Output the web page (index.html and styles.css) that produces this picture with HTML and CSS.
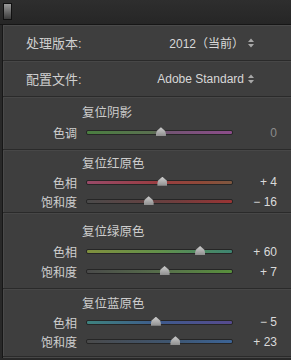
FILE: index.html
```html
<!DOCTYPE html>
<html lang="zh-CN">
<head>
    <meta charset="UTF-8">
    <meta name="viewport" content="width=device-width, initial-scale=1.0">
    <title>校准</title>
    <link rel="stylesheet" href="styles.css">
</head>
<body>
    <div class="topbar">
        <div class="grip"></div>
    </div>
    <div class="panel">
        <div class="pick-row">
            <span class="pick-label">处理版本:</span>
            <span class="pick-value">2012（当前）
                <svg class="updown" width="6" height="10" viewBox="0 0 6 10"><path d="M0 4 L3 0.5 L6 4 Z M0 6 L3 9.5 L6 6 Z"/></svg>
            </span>
        </div>
        <div class="pick-row">
            <span class="pick-label">配置文件:</span>
            <span class="pick-value">Adobe Standard
                <svg class="updown" width="6" height="10" viewBox="0 0 6 10"><path d="M0 4 L3 0.5 L6 4 Z M0 6 L3 9.5 L6 6 Z"/></svg>
            </span>
        </div>

        <div class="group g-shadow">
            <div class="group-title">复位阴影</div>
            <div class="slider-row">
                <span class="s-label">色调</span>
                <div class="track t-tint"><span class="thumb" style="left: 51%"></span></div>
                <span class="s-value dim">0</span>
            </div>
        </div>

        <div class="group g-red">
            <div class="group-title">复位红原色</div>
            <div class="slider-row">
                <span class="s-label">色相</span>
                <div class="track t-red-hue"><span class="thumb" style="left: 52%"></span></div>
                <span class="s-value">+ 4</span>
            </div>
            <div class="slider-row">
                <span class="s-label">饱和度</span>
                <div class="track t-red-sat"><span class="thumb" style="left: 42.5%"></span></div>
                <span class="s-value">&minus; 16</span>
            </div>
        </div>

        <div class="group g-green">
            <div class="group-title">复位绿原色</div>
            <div class="slider-row tall">
                <span class="s-label">色相</span>
                <div class="track t-green-hue"><span class="thumb" style="left: 78%"></span></div>
                <span class="s-value">+ 60</span>
            </div>
            <div class="slider-row tall">
                <span class="s-label">饱和度</span>
                <div class="track t-green-sat"><span class="thumb" style="left: 53.5%"></span></div>
                <span class="s-value">+ 7</span>
            </div>
        </div>

        <div class="group g-blue">
            <div class="group-title">复位蓝原色</div>
            <div class="slider-row">
                <span class="s-label">色相</span>
                <div class="track t-blue-hue"><span class="thumb" style="left: 47.5%"></span></div>
                <span class="s-value">&minus; 5</span>
            </div>
            <div class="slider-row">
                <span class="s-label">饱和度</span>
                <div class="track t-blue-sat"><span class="thumb" style="left: 61%"></span></div>
                <span class="s-value">+ 23</span>
            </div>
        </div>
    </div>
</body>
</html>
```

FILE: styles.css
```css
body {
    margin: 0;
    background-color: #282828;
    font-family: "Liberation Sans", "Noto Sans CJK SC", sans-serif;
    font-size: 12px;
    color: #d2d2d2;
    width: 291px;
    height: 360px;
    overflow: hidden;
}

.topbar {
    height: 25px;
    padding: 3px 0 0 3px;
    box-sizing: border-box;
    border-bottom: 1px solid #161616;
    background: linear-gradient(#2e2e2e, #262626);
}

.grip {
    width: 7px;
    height: 15px;
    border: 1px solid #111;
    background: linear-gradient(#9a9a9a, #6a6a6a 50%, #3a3a3a);
}

.panel {
    margin-left: 2px;
    border-left: 1px solid #171717;
    border-bottom: 1px solid #141414;
    background-color: #3e3e3e;
    box-shadow: inset 1px 1px 0 #4a4a4a;
}

.pick-row {
    height: 35px;
    display: flex;
    align-items: center;
    justify-content: space-between;
    padding: 0 37px 0 23px;
    border-bottom: 1px solid #2a2a2a;
    box-shadow: 0 1px 0 #474747;
}

.pick-label {
    color: #cfcfcf;
    font-size: 13px;
}

.pick-value {
    display: flex;
    align-items: center;
    gap: 4px;
    color: #d8d8d8;
}

.updown {
    fill: #a8a8a8;
}

.group {
    border-bottom: 1px solid #2a2a2a;
    box-shadow: 0 1px 0 #474747;
}

.g-shadow { padding: 6px 0 6px; }
.g-red { padding: 5px 0 0; }
.g-green { padding: 10px 0 6px; }
.g-blue { padding: 6px 0 4px; }

.group-title {
    height: 18px;
    line-height: 18px;
    padding-left: 79px;
    color: #cccccc;
    font-size: 12.5px;
}

.g-shadow .group-title {
    height: 20px;
    line-height: 20px;
}

.g-green .group-title {
    height: 19px;
}

.slider-row {
    display: grid;
    grid-template-columns: 74px 147px 35px;
    column-gap: 9px;
    align-items: center;
    height: 19.5px;
}

.slider-row.tall {
    height: 20px;
}

.s-label {
    text-align: right;
    color: #cfcfcf;
}

.s-value {
    text-align: right;
    color: #dadada;
}

.s-value.dim {
    color: #8c8c8c;
}

.track {
    position: relative;
    height: 3px;
    border-radius: 2px;
    border: 1px solid #262626;
}

.thumb {
    position: absolute;
    top: -4px;
    width: 10px;
    height: 9px;
    margin-left: -5px;
    background: linear-gradient(#cfcfcf, #8e8e8e);
    clip-path: polygon(50% 0, 90% 40%, 100% 70%, 100% 100%, 0 100%, 0 70%, 10% 40%);
}

.t-tint { background: linear-gradient(90deg, #4a7e40, #5a7050 45%, #725472 55%, #8c4c8a); }
.t-red-hue { background: linear-gradient(90deg, #984a68, #9a3c40 50%, #8e4a38 80%, #7e5840); }
.t-red-sat { background: linear-gradient(90deg, #4a4a4a, #6e3e3e 60%, #9a3434); }
.t-green-hue { background: linear-gradient(90deg, #80903e, #62904a 50%, #3e8472); }
.t-green-sat { background: linear-gradient(90deg, #4a4a4a, #58744a 60%, #58903c); }
.t-blue-hue { background: linear-gradient(90deg, #3e827e, #3e5a8c 50%, #564a8e); }
.t-blue-sat { background: linear-gradient(90deg, #4a4a4a, #3e5672 60%, #3c6496); }
```
